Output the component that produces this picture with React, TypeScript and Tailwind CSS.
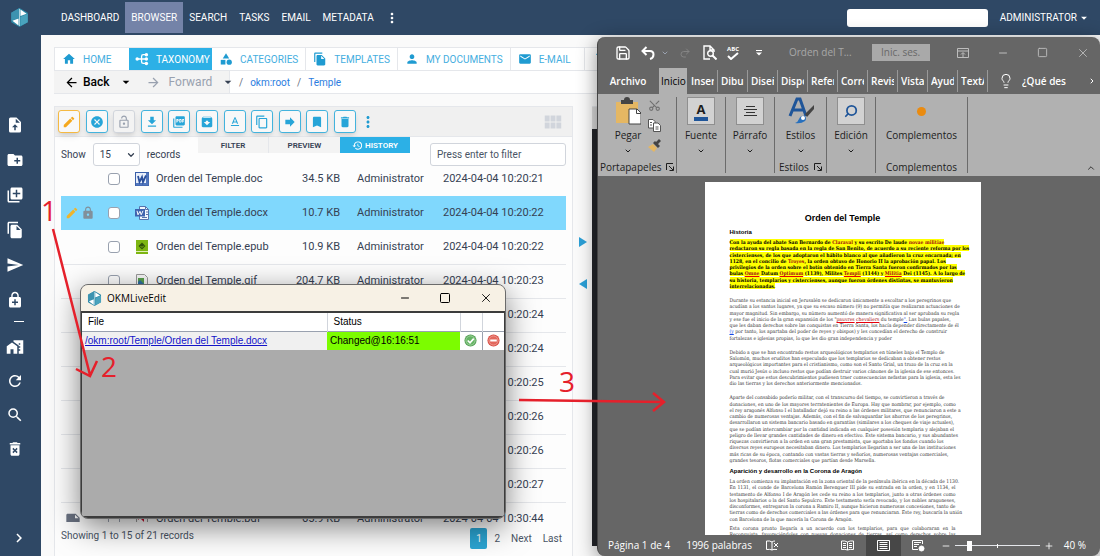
import type { ReactNode } from "react";
import type { IconType } from "react-icons";
import {
  MdArchive,
  MdArrowBack,
  MdArrowDropDown,
  MdArrowForward,
  MdBookmark,
  MdCancel,
  MdCategory,
  MdChevronRight,
  MdContentCopy,
  MdCreateNewFolder,
  MdDelete,
  MdDeleteForever,
  MdEdit,
  MdEmail,
  MdEnhancedEncryption,
  MdFileCopy,
  MdFileDownload,
  MdForward,
  MdHistory,
  MdHome,
  MdHomeWork,
  MdLibraryAdd,
  MdLock,
  MdMoreVert,
  MdNote,
  MdOutlineLockOpen,
  MdPerson,
  MdPictureAsPdf,
  MdRefresh,
  MdSearch,
  MdSend,
  MdTextFormat,
  MdViewModule,
} from "react-icons/md";
import {
  ChevronDown,
  ChevronRight,
  ChevronUp,
  Lightbulb,
  Minus,
  Plus,
  Redo2,
  Save,
  Scissors,
  Search,
  Square,
  X,
} from "lucide-react";

const menu = ["DASHBOARD", "BROWSER", "SEARCH", "TASKS", "EMAIL", "METADATA"];

const sideTop: [string, IconType][] = [
  ["New folder", MdCreateNewFolder],
  ["New record", MdLibraryAdd],
  ["Copy from template", MdFileCopy],
  ["Send", MdSend],
  ["Encrypt", MdEnhancedEncryption],
];

const sideBottom: [string, IconType][] = [
  ["Set home", MdHomeWork],
  ["Refresh", MdRefresh],
  ["Find", MdSearch],
  ["Purge", MdDeleteForever],
];

const toolbar: [string, IconType][] = [
  ["Edit", MdEdit],
  ["Cancel edit", MdCancel],
  ["Lock", MdOutlineLockOpen],
  ["Download", MdFileDownload],
  ["Download as PDF", MdPictureAsPdf],
  ["Archive", MdArchive],
  ["Rename", MdTextFormat],
  ["Copy", MdContentCopy],
  ["Move", MdForward],
  ["Bookmark", MdBookmark],
  ["Delete", MdDelete],
];

type FileKind = "doc" | "docx" | "epub" | "gif" | "pdf";

const files: { name: string; kind: FileKind; size: string; date: string; note?: boolean }[] = [
  { name: "Orden del Temple.doc", kind: "doc", size: "34.5 KB", date: "2024-04-04 10:20:21" },
  { name: "Orden del Temple.docx", kind: "docx", size: "10.7 KB", date: "2024-04-04 10:20:22" },
  { name: "Orden del Temple.epub", kind: "epub", size: "10.9 KB", date: "2024-04-04 10:20:22" },
  { name: "Orden del Temple.gif", kind: "gif", size: "204.7 KB", date: "2024-04-04 10:20:23" },
  { name: "", kind: "gif", size: "", date: "2024-04-04 10:20:24" },
  { name: "", kind: "gif", size: "", date: "2024-04-04 10:20:24" },
  { name: "", kind: "gif", size: "", date: "2024-04-04 10:20:25" },
  { name: "", kind: "gif", size: "", date: "2024-04-04 10:20:26" },
  { name: "", kind: "gif", size: "", date: "2024-04-04 10:20:26" },
  { name: "", kind: "gif", size: "", date: "2024-04-04 10:20:27" },
  { name: "Orden del Temple.pdf", kind: "pdf", size: "65.9 KB", date: "2024-04-04 10:30:44", note: true },
];

// *word* is a spelling mistake, _word_ a grammar hint
const intro = [
  "Con la ayuda del abate San Bernardo de *Claraval* y su escrito De laude *novae* *militiae*",
  "redactaron su regla basada en la regla de San Benito, de acuerdo a su reciente reforma por los",
  "cistercienses, de los que adoptaron el hábito blanco al que añadieron la cruz encarnada; en",
  "1128, en el concilio de *Troyes*, la orden obtuvo de Honorio II la aprobación papal. Los",
  "privilegios de la orden sobre el botín obtenido en Tierra Santa fueron confirmados por las",
  "bulas *Omne* Datum *Optimum* (1139), Milites *Templi* (1144) y *Militia* Dei (1145). A lo largo de",
  "su historia, templarios y cistercienses, aunque fueron órdenes distintas, se mantuvieron",
  "interrelacionadas.",
];

const paragraphs = [
  [
    "Durante su estancia inicial en Jerusalén se dedicaron únicamente a escoltar a los peregrinos que",
    "acudían a los santos lugares, ya que su escaso número (9) no permitía que realizaran actuaciones de",
    "mayor magnitud. Sin embargo, su número aumentó de manera significativa al ser aprobada su regla",
    "y ese fue el inicio de la gran expansión de los \"*pauvres* *chevaliers* du temple_\"._ Las bulas papales,",
    "que les daban derechos sobre las conquistas en Tierra Santa, los hacía depender directamente de él",
    "_(y_ por tanto, los apartaba del poder de reyes y obispos) y les concedían el derecho de construir",
    "fortalezas e iglesias propias, lo que les dio gran independencia y poder",
  ],
  [
    "Debido a que se han encontrado restos arqueológicos templarios en túneles bajo el Templo de",
    "Salomón, muchos eruditos han especulado que los templarios se dedicaban a obtener restos",
    "arqueológicos importantes para el cristianismo, como son el Santo Grial, un trozo de la cruz en la",
    "cual murió Jesús o incluso restos que podían destruir varios cánones de la iglesia de ese entonces.",
    "Para evitar que estos descubrimientos pudiesen traer consecuencias nefastas para la iglesia, esta les",
    "dio las tierras y los derechos anteriormente mencionados.",
  ],
  [
    "Aparte del consabido poderío militar, con el transcurso del tiempo, se convirtieron a través de",
    "donaciones, en uno de los mayores terratenientes de Europa. Hay que nombrar, por ejemplo, como",
    "el rey aragonés Alfonso I el batallador dejó su reino a las órdenes militares, que renunciaron a este a",
    "cambio de numerosas ventajas. Además, con el fin de salvaguardar los ahorros de los peregrinos,",
    "desarrollaron un sistema bancario basado en garantías (similares a los cheques de viaje actuales),",
    "que se podían intercambiar por la cantidad indicada en cualquier posesión templaria y alejaban el",
    "peligro de llevar grandes cantidades de dinero en efectivo. Este sistema bancario, y sus abundantes",
    "riquezas convirtieron a la orden en una gran prestamista, que aportaba los fondos cuando los",
    "diversos reyes europeos necesitaban dinero. Los templarios llegarían a ser una de las instituciones",
    "más ricas de su época, contando con vastas tierras y señoríos, numerosas ventajas comerciales,",
    "grandes tesoros, flotas comerciales que partían desde Marsella.",
  ],
];

const aragon = [
  "La orden comienza su implantación en la zona oriental de la península ibérica en la década de 1130.",
  "En 1131, el conde de Barcelona Ramón Berenguer III pide su entrada en la orden, y en 1134, el",
  "testamento de Alfonso I de Aragón les cede su reino a los templarios, junto a otras órdenes como",
  "los hospitalarios o la del Santo Sepulcro. Este testamento sería revocado, y los nobles aragoneses,",
  "disconformes, entregaron la corona a Ramiro II, aunque hicieron numerosas concesiones, tanto de",
  "tierras como de derechos comerciales a las órdenes para que renunciaran. Este rey, buscaría la unión",
  "con Barcelona de la que nacería la Corona de Aragón.",
];

const corona = [
  "Esta corona pronto llegaría a un acuerdo con los templarios, para que colaboraran en la",
  "Reconquista, favoreciéndoles con nuevas donaciones de tierras, así como derechos sobre las",
];

const ribbonTabs = ["Inser", "Dibu", "Diseñ", "Dispo", "Refer", "Corre", "Revis", "Vista", "Ayud", "TextA"];

function Logo({ className }: { className?: string }) {
  return (
    <svg viewBox="0 0 20 20" className={className} aria-hidden="true">
      <path d="M10 0 18.700 5v10L10 20 1.300 15V5z" fill="#2b87a5" />
      <path d="M10 0 1.300 5v8.500L10 10z" fill="#3d93b0" />
      <path d="M11 1.500v7l6.500-2.500z" fill="#fff" />
      <path d="M2.500 13.500 9 11v7.500z" fill="#fff" />
      <path d="M11 9.500 18.700 6v9L11 19z" fill="#4aa3bd" />
      <path d="M10 1v18" stroke="#d5eaf1" strokeWidth=".8" />
    </svg>
  );
}

function UploadIcon() {
  return (
    <svg viewBox="0 0 24 24" className="size-[18px]" fill="currentColor" fillRule="evenodd" aria-hidden="true">
      <path d="M6 2h8l6 6v12a2 2 0 0 1-2 2H6a2 2 0 0 1-2-2V4a2 2 0 0 1 2-2zm7 1.500V9h5.500zM12 11l-4 4h3v4h2v-4h3z" />
    </svg>
  );
}

function TaxonomyIcon() {
  return (
    <svg viewBox="0 0 16 16" className="size-[14px]" fill="none" stroke="currentColor" strokeWidth="1.500" aria-hidden="true">
      <path d="M3 8h9M12 3H9.500Q7.500 3 7.500 5v6q0 2 2 2H12" />
      <circle cx="2.500" cy="8" r="2" fill="currentColor" stroke="none" />
      <circle cx="13" cy="3" r="2" fill="currentColor" stroke="none" />
      <circle cx="13" cy="8" r="2" fill="currentColor" stroke="none" />
      <circle cx="13" cy="13" r="2" fill="currentColor" stroke="none" />
    </svg>
  );
}

function FileIcon({ kind }: { kind: FileKind }) {
  if (kind === "doc") {
    return (
      <svg viewBox="0 0 14 14" className="size-3.5" aria-hidden="true">
        <rect x=".5" y=".5" width="13" height="13" fill="#e9effa" stroke="#3a5fa9" />
        <path d="M11 1h2.500v12.500H1V11h10z" fill="#5277bd" />
        <path d="m3 4 1.500 6L7 5l1 5 3-6.500" fill="none" stroke="#2a4f9c" strokeWidth="1.800" />
      </svg>
    );
  }
  if (kind === "docx") {
    return (
      <svg viewBox="0 0 14 14" className="size-3.5" aria-hidden="true">
        <path d="M4.500.5h6l3 3v10h-9z" fill="#f3f6fc" stroke="#5673ad" />
        <path d="M10.500.5v3h3M7 11.500h5M11 6h2M11 8.500h2" fill="none" stroke="#5673ad" />
        <rect y="3" width="10" height="7.500" fill="#3f63ae" />
        <path d="m2 4.800 1 4 2-3.500 1.200 3.500 1.800-4" fill="none" stroke="#fff" />
      </svg>
    );
  }
  if (kind === "epub") {
    return (
      <svg viewBox="0 0 14 14" className="size-3.5" aria-hidden="true">
        <rect x="1" width="12" height="14" fill="#7db512" />
        <path d="M1 11.500h12" stroke="#e0efb8" />
        <path d="M7 2.500 10.500 6 7 9.500 3.500 6z" fill="#2f5206" />
        <path d="M5.500 6 7 7.500 8.800 5.700" fill="none" stroke="#7db512" />
      </svg>
    );
  }
  return (
    <svg viewBox="0 0 14 14" className="size-3.5" aria-hidden="true">
      <path d="M1.500.5h8l3 3v10h-11z" fill="#f8f8f8" stroke="#9a9a9a" />
      <rect x="3" y="4" width="6" height="6" fill={kind === "pdf" ? "#c8102e" : "#58a04c"} />
      <path d="M3 8 5 6l4 4H3z" fill={kind === "pdf" ? "#fff" : "#2f6fa5"} />
    </svg>
  );
}

function Line({ text }: { text: string }) {
  return (
    <>
      {text.split(/(\*[^*]+\*|_[^_]+_)/).map((part, i) => {
        if (part.startsWith("*")) {
          return (
            <span key={i} className="text-[#a01010] underline decoration-red-600">
              {part.slice(1, -1)}
            </span>
          );
        }
        if (part.startsWith("_")) {
          return (
            <span key={i} className="text-blue-700 underline">
              {part.slice(1, -1)}
            </span>
          );
        }
        return part;
      })}
    </>
  );
}

function Tab({ children, label }: { children: ReactNode; label: string }) {
  return (
    <a href="#" className="flex min-w-[74px] items-center gap-[7px] border-r border-gray-200 px-[7px]">
      {children}
      {label}
    </a>
  );
}

function Header() {
  return (
    <header className="flex h-[35px] shrink-0 items-center bg-[#2f4865] pl-[10px] pr-[9px] text-[10px] text-white">
      <Logo className="mr-[26px] size-[19px] shrink-0" />
      <nav className="flex items-center">
        {menu.map((m) => (
          <a
            key={m}
            href="#"
            className={
              m === "BROWSER"
                ? "flex h-[31px] items-center bg-[#7483a8] px-[6px]"
                : "flex h-[31px] items-center px-[6px]"
            }
          >
            {m}
          </a>
        ))}
        <button aria-label="More">
          <MdMoreVert className="ml-1 size-4" />
        </button>
      </nav>
      <input aria-label="Quick search" className="ml-auto h-[18px] w-[141px] rounded-[3px] bg-white px-2" />
      <button className="ml-3 flex items-center">
        ADMINISTRATOR
        <MdArrowDropDown className="size-3.5" />
      </button>
    </header>
  );
}

function Sidebar() {
  return (
    <aside className="flex w-[41px] shrink-0 flex-col bg-[#2f4865] pb-[9px] pl-[6px] pt-[81px] text-white">
      <div className="flex flex-col gap-[17px]">
        <button aria-label="Upload" className="w-[18px]">
          <UploadIcon />
        </button>
        {sideTop.map(([label, Icon]) => (
          <button key={label} aria-label={label} className="w-[18px]">
            <Icon className="size-[18px]" />
          </button>
        ))}
      </div>
      <hr className="ml-2 mt-3 w-[10px] border-white" />
      <div className="mt-4 flex flex-col gap-4">
        {sideBottom.map(([label, Icon]) => (
          <button key={label} aria-label={label} className="w-[18px]">
            <Icon className="size-[18px]" />
          </button>
        ))}
      </div>
      <button aria-label="Expand" className="mt-auto w-[18px] pl-1">
        <MdChevronRight className="size-[18px]" />
      </button>
    </aside>
  );
}

function Navigation() {
  return (
    <div className="border-y border-gray-200">
      <nav className="flex h-[22px] whitespace-nowrap bg-white text-[10px] text-[#45aee0]">
        <a href="#" className="flex w-[75px] items-center gap-[7px] border-l border-gray-200 pl-[7px]">
          <MdHome className="size-[14px] text-[#1f9bd1]" />
          HOME
        </a>
        <a href="#" className="flex w-[83px] items-center gap-[7px] bg-[#2cb0e6] pl-[6px] text-white">
          <TaxonomyIcon />
          TAXONOMY
        </a>
        <Tab label="CATEGORIES">
          <MdCategory className="size-[14px] text-[#1f9bd1]" />
        </Tab>
        <Tab label="TEMPLATES">
          <MdFileCopy className="size-[14px] text-[#1f9bd1]" />
        </Tab>
        <Tab label="MY DOCUMENTS">
          <MdPerson className="size-[14px] text-[#1f9bd1]" />
        </Tab>
        <Tab label="E-MAIL">
          <MdEmail className="size-[14px] text-[#1f9bd1]" />
        </Tab>
        <a href="#" aria-label="Trash" className="flex items-center pl-2">
          <MdDelete className="size-4 text-[#1f9bd1]" />
        </a>
      </nav>
      <div className="flex h-[23px] items-center border-t border-gray-200 bg-white text-[12px]">
        <div className="flex w-[176px] shrink-0 items-center self-stretch border-r border-gray-200 bg-[#f3f3f3] pl-[10px]">
          <button className="flex items-center gap-1 font-medium text-black">
            <MdArrowBack className="size-[15px]" />
            Back
            <MdArrowDropDown className="ml-1 size-4" />
          </button>
          <button className="ml-3 flex items-center gap-1 text-gray-400" disabled>
            <MdArrowForward className="mr-1 size-[15px]" />
            Forward
            <MdArrowDropDown className="ml-1 size-4 text-gray-700" />
          </button>
        </div>
        <div className="flex gap-[7px] pl-[9px] text-[10px] text-[#2b7de0]">
          <span className="text-gray-500">/</span>
          <a href="#">okm:root</a>
          <span className="text-gray-500">/</span>
          <a href="#">Temple</a>
        </div>
      </div>
    </div>
  );
}

function Browser() {
  return (
    <section className="flex w-[519px] shrink-0 flex-col border-x border-t border-gray-200 bg-[#fdfdfd]">
      <div className="flex h-[30px] shrink-0 items-center border-b border-gray-200 bg-[#f0f0f0] pl-[3px] pr-2">
        <div className="flex w-[298px] justify-between">
          {toolbar.map(([label, Icon], i) => (
            <button
              key={label}
              aria-label={label}
              className={
                i === 0
                  ? "flex h-[23px] w-[22px] items-center justify-center rounded-[3px] border border-[#f5b942] bg-[#f8f8f8] text-[#f5a81c] shadow-md"
                  : i === 2
                    ? "flex h-[23px] w-[22px] items-center justify-center rounded-[3px] border border-gray-300 bg-[#f3f3f3] text-gray-400 shadow-md"
                    : "flex h-[23px] w-[22px] items-center justify-center rounded-[3px] border border-[#43b3dd] bg-[#f8f8f8] text-[#27a5d8] shadow-md"
              }
            >
              <Icon className="size-[14px]" />
            </button>
          ))}
        </div>
        <button aria-label="More actions" className="ml-[3px] text-[#1f9bd1]">
          <MdMoreVert className="size-[18px]" />
        </button>
        <button aria-label="Grid view" className="ml-auto text-gray-300">
          <MdViewModule className="size-[22px]" />
        </button>
      </div>
      <div className="flex h-[29px] shrink-0 items-start px-[6px] text-[10px] text-gray-700">
        <label className="flex w-[137px] items-center gap-[7px] pt-[6px]">
          Show
          <span className="relative flex items-center">
            <select className="h-[23px] w-[47px] appearance-none rounded-[3px] border border-gray-300 bg-white pl-[6px]">
              <option>15</option>
            </select>
            <ChevronDown className="pointer-events-none absolute right-1 size-[10px]" strokeWidth={3} />
          </span>
          records
        </label>
        <div className="flex h-4 text-[8px] font-semibold">
          <button className="w-[71px] border-r border-gray-200 bg-[#f3f3f3] pt-px">FILTER</button>
          <button className="w-[71px] bg-[#f3f3f3] pt-px">PREVIEW</button>
          <button className="flex w-[70px] items-center justify-center gap-[2px] bg-[#2cb0e6] pt-px text-white">
            <MdHistory className="size-[11px]" />
            HISTORY
          </button>
        </div>
        <input
          aria-label="Filter"
          placeholder="Press enter to filter"
          className="ml-auto mt-[6px] h-[23px] w-[136px] rounded-[3px] border border-gray-300 bg-white px-[6px] placeholder:text-gray-600"
        />
      </div>
      <div className="-mt-1 h-[360px] shrink-0 overflow-hidden px-[6px]">
        <table className="w-full table-fixed text-[11px] text-gray-700">
          <colgroup>
            <col className="w-[39px]" />
            <col className="w-[28px]" />
            <col className="w-[28px]" />
            <col />
            <col className="w-[50px]" />
            <col className="w-[103px]" />
            <col className="w-[123px]" />
          </colgroup>
          <tbody>
            {files.map((f, i) => (
              <tr
                key={i}
                className={
                  f.kind === "docx" ? "h-[34px] bg-[#80d8fd]" : i === 0 ? "h-[34px]" : "h-[34px] border-b border-gray-200"
                }
              >
                <td>
                  {f.kind === "docx" && (
                    <span className="flex items-center gap-[2px] pl-1">
                      <MdEdit className="size-[14px] text-[#f0b429]" />
                      <MdLock className="size-[14px] text-[#81909b]" />
                    </span>
                  )}
                  {f.note && <MdNote className="ml-1 size-4 text-gray-500" />}
                </td>
                <td>
                  <input
                    type="checkbox"
                    aria-label={`Select row ${i + 1}`}
                    className="mx-auto block size-3 appearance-none rounded-[3px] border border-gray-400 bg-white"
                  />
                </td>
                <td>
                  <span className="flex justify-center">
                    <FileIcon kind={f.kind} />
                  </span>
                </td>
                <td className="whitespace-nowrap">{f.name}</td>
                <td className="whitespace-nowrap text-right">{f.size}</td>
                <td className="pl-[17px]">{f.name && "Administrator"}</td>
                <td className="whitespace-nowrap">{f.date}</td>
              </tr>
            ))}
          </tbody>
        </table>
      </div>
      <div className="flex items-start justify-between px-[6px] pt-[6px] text-[10px] text-gray-600">
        <span>Showing 1 to 15 of 21 records</span>
        <nav className="flex items-center gap-[7px]">
          <a href="#" className="flex h-[21px] w-[17px] items-center justify-center rounded-[2px] bg-[#2ba5d3] text-white">
            1
          </a>
          <a href="#">2</a>
          <a href="#" className="ml-1">
            Next
          </a>
          <a href="#" className="mx-1">
            Last
          </a>
        </nav>
      </div>
    </section>
  );
}

function LiveEdit() {
  return (
    <section className="absolute left-[80px] top-[284px] flex h-[235px] w-[426px] flex-col overflow-hidden rounded-lg border border-[#6b6b6b] bg-[#ababab] font-['Liberation_Sans',sans-serif] text-black shadow-[0_8px_30px_rgba(0,0,0,0.5)]">
      <header className="flex h-[26px] shrink-0 items-center bg-[#f7f1e5] pl-[6px] pr-3 font-['Open_Sans',sans-serif] text-[10px]">
        <Logo className="mr-[5px] size-[15px]" />
        OKMLiveEdit
        <div className="ml-auto flex items-center gap-7">
          <button aria-label="Minimize">
            <Minus className="size-3" strokeWidth={2} />
          </button>
          <button aria-label="Maximize">
            <Square className="size-3" strokeWidth={2} />
          </button>
          <button aria-label="Close">
            <X className="size-[14px]" strokeWidth={1.5} />
          </button>
        </div>
      </header>
      <div className="flex-1 border-x border-b-2 border-t-2 border-[#3c3c3c]">
        <table className="w-full table-fixed text-left text-[10px]">
          <colgroup>
            <col />
            <col className="w-[133px]" />
            <col className="w-[22px]" />
            <col className="w-[22px]" />
          </colgroup>
          <thead>
            <tr className="h-[18px] bg-white">
              <th className="pl-[6px] font-normal">File</th>
              <th className="border-l border-gray-300 pl-[6px] font-normal">Status</th>
              <th className="border-l border-gray-300" />
              <th className="border-l border-gray-300" />
            </tr>
          </thead>
          <tbody>
            <tr className="h-[19px] border-t border-gray-400 bg-[#f0f0f0]">
              <td className="pl-[3px]">
                <a href="#" className="text-[#1414c8] underline">
                  /okm:root/Temple/Orden del Temple.docx
                </a>
              </td>
              <td className="bg-[#7cfc00] pl-[3px]">Changed@16:16:51</td>
              <td className="bg-white">
                <button aria-label="Check in" className="mx-auto block">
                  <svg viewBox="0 0 14 14" className="size-[13px]">
                    <circle cx="7" cy="7" r="6.500" fill="#4f9e50" />
                    <circle cx="7" cy="7" r="5" fill="#66b565" stroke="#a6d6a4" />
                    <path d="m4 7 2.500 2.500L10.500 5" fill="none" stroke="#fff" strokeWidth="1.800" />
                  </svg>
                </button>
              </td>
              <td className="border-l border-gray-400 bg-white">
                <button aria-label="Cancel" className="mx-auto block">
                  <svg viewBox="0 0 14 14" className="size-[13px]">
                    <circle cx="7" cy="7" r="6.500" fill="#d8463d" />
                    <circle cx="7" cy="7" r="5" fill="#e3685d" stroke="#f0a39b" />
                    <path d="M3.500 7h7" stroke="#fff" strokeWidth="2.200" />
                  </svg>
                </button>
              </td>
            </tr>
          </tbody>
        </table>
      </div>
    </section>
  );
}

function RibbonGroup({ label, children }: { label: string; children: ReactNode }) {
  return (
    <button className="flex w-[49px] shrink-0 flex-col items-center border-r border-[#6b6b6b]">
      <span className="flex size-7 items-center justify-center border border-[#8f8f8f] bg-[#d2d2d2]">{children}</span>
      <span className="mt-[2px] leading-4">{label}</span>
      <ChevronDown className="mt-1 size-2" strokeWidth={3} />
    </button>
  );
}

function Launcher() {
  return (
    <svg viewBox="0 0 8 8" className="size-2" fill="none" stroke="currentColor" aria-hidden="true">
      <path d="M.5 7V.5H7M3 3l4 4M7.500 3.500v4h-4" />
    </svg>
  );
}

function Word() {
  return (
    <section className="absolute bottom-0 left-[597px] right-0 top-[37px] flex flex-col overflow-hidden rounded-lg border-l border-[#444] bg-[#666] font-['Open_Sans',sans-serif] text-[10px] text-white shadow-[0_4px_20px_rgba(0,0,0,0.45)]">
      <header className="flex h-[31px] shrink-0 items-center pl-[17px] pr-[10px]">
        <button aria-label="Save">
          <Save className="size-4" />
        </button>
        <button aria-label="Undo" className="ml-[10px] flex items-center gap-[6px]">
          <svg viewBox="0 0 14 14" className="size-[14px]" fill="none" stroke="currentColor" strokeWidth="2">
            <path d="M5.500 1 1.500 5l4 4M2 5h7q3.500 0 3.500 3.500T9 13" />
          </svg>
          <ChevronDown className="size-2 text-gray-400" strokeWidth={3} />
        </button>
        <button aria-label="Redo" className="ml-[10px] text-[#858585]" disabled>
          <Redo2 className="size-3" />
        </button>
        <button aria-label="Print preview" className="ml-3">
          <svg viewBox="0 0 14 15" className="h-[15px] w-[14px]" fill="none" stroke="currentColor" strokeWidth="1.400">
            <path d="M7 14H1V1h6l4 4v2M7 1v4h4" />
            <circle cx="7.500" cy="8.500" r="2.800" />
            <path d="m9.500 10.500 4 4" strokeWidth="2" />
          </svg>
        </button>
        <button aria-label="Spelling" className="ml-[10px] flex flex-col items-center text-[6px] font-bold leading-[6px]">
          ABC
          <svg viewBox="0 0 12 8" className="h-2 w-3" fill="none" stroke="currentColor" strokeWidth="2">
            <path d="m1 4 3 3 7-6" />
          </svg>
        </button>
        <button aria-label="Customize toolbar" className="ml-[17px]">
          <svg viewBox="0 0 6 6" className="size-[6px]" fill="currentColor">
            <path d="M0 0h6v1H0zM0 2.500h6L3 5.500z" />
          </svg>
        </button>
        <span className="ml-[27px] whitespace-nowrap text-[#a8a8a8]">Orden del T...</span>
        <button className="ml-5 h-[17px] w-[58px] bg-[#a9a9a9] text-[#686868]">Inic. ses.</button>
        <div className="ml-auto flex items-center gap-7 text-[#bdbdbd]">
          <button aria-label="Ribbon options">
            <svg viewBox="0 0 12 10" className="h-[10px] w-3" fill="none" stroke="currentColor">
              <path d="M.5.5h11v9H.5zM.5 3h11M6 9V5M4 6.500l2-2 2 2" />
            </svg>
          </button>
          <button aria-label="Minimize Word">
            <Minus className="size-3" />
          </button>
          <button aria-label="Maximize Word">
            <Square className="size-[11px]" />
          </button>
          <button aria-label="Close Word">
            <X className="size-[14px]" strokeWidth={1.5} />
          </button>
        </div>
      </header>
      <nav className="flex h-[26px] shrink-0 items-center pl-[11px] pr-1">
        <button className="w-[38px] font-semibold">Archivo</button>
        <button className="ml-3 h-full w-[28px] overflow-hidden whitespace-nowrap bg-[#b1b1b1] pl-[2px] text-left text-black">
          Inicio
        </button>
        <div className="flex pl-1 font-semibold">
          {ribbonTabs.map((t) => (
            <button key={t} className="mr-[3px] h-[22px] w-[27px] border-r border-[#999] pr-[3px] text-left">
              <span className="block overflow-hidden whitespace-nowrap">{t}</span>
            </button>
          ))}
        </div>
        <Lightbulb className="ml-[7px] size-4 shrink-0" strokeWidth={1.5} />
        <button className="ml-2 w-[44px] overflow-hidden whitespace-nowrap text-left font-semibold">¿Qué des</button>
        <ChevronRight className="ml-auto size-2 shrink-0" strokeWidth={3} />
      </nav>
      <div className="flex h-[82px] shrink-0 bg-[#b1b1b1] py-[3px] text-[#1d1d1d]">
        <div className="flex w-[79px] shrink-0 flex-col justify-between border-r border-[#6b6b6b] px-[2px]">
          <div className="flex gap-[6px] pl-[14px]">
            <button className="flex w-7 flex-col items-center">
              <svg viewBox="0 0 26 28" className="h-[28px] w-[26px]">
                <path d="M1 5h22v21H1z" fill="#e5b763" />
                <path d="M6 3h3q0-3 3-3t3 3h3v4H6z" fill="#444" />
                <path d="M14 12h8l4 4v11H14z" fill="#fff" stroke="#444" />
                <path d="M21.500 12v4.500H26" fill="none" stroke="#444" />
              </svg>
              <span className="mt-[2px] leading-4">Pegar</span>
              <ChevronDown className="mt-1 size-2" strokeWidth={3} />
            </button>
            <div className="flex flex-col gap-[7px] pt-[2px]">
              <button aria-label="Cut" className="text-[#707070]">
                <Scissors className="size-[13px] -rotate-90" />
              </button>
              <button aria-label="Copy text">
                <svg viewBox="0 0 13 13" className="size-[13px]" fill="#fff" stroke="#555">
                  <path d="M.5.500H5l2 2V9H.5z" />
                  <path d="M5.500 4H10l2.500 2.500v6h-7zM7.500 8h3M7.500 10h3M2 3.500h2M2 6h2" />
                </svg>
              </button>
              <button aria-label="Copy format">
                <svg viewBox="0 0 13 13" className="size-[13px]">
                  <path d="m0 8 5-3 4 4-3 4z" fill="#e5b763" />
                  <path d="m5 4 5 5 2-2-2-2 3-3-2-2-3 3-1-1z" fill="#444" />
                </svg>
              </button>
            </div>
          </div>
          <div className="flex items-center justify-between leading-3">
            Portapapeles
            <Launcher />
          </div>
        </div>
        <RibbonGroup label="Fuente">
          <span className="border-b-4 border-[#1f5599] px-[3px] text-[13px] font-bold leading-4">A</span>
        </RibbonGroup>
        <RibbonGroup label="Párrafo">
          <svg viewBox="0 0 13 11" className="h-[11px] w-[13px]" stroke="#333">
            <path d="M2 .5h9M0 3.500h13M2 6.500h9M0 9.500h13" />
          </svg>
        </RibbonGroup>
        <div className="flex w-[52px] shrink-0 flex-col justify-between border-r border-[#6b6b6b] px-1">
          <button className="flex flex-col items-center">
            <svg viewBox="0 0 26 28" className="h-[28px] w-[26px]">
              <path d="M2 19 9 2h3l6 17M5 13h10" fill="none" stroke="#1f5599" strokeWidth="3" />
              <path d="M26 8 17 17l2 3 7-8z" fill="#444" />
              <path d="M7 26q3-1 4-4 2-4 6-3 2 3 0 5-4 3-10 2z" fill="#2870bd" />
              <circle cx="15" cy="21" r="2" fill="#fff" />
            </svg>
            <span className="mt-[2px] leading-4">Estilos</span>
            <ChevronDown className="mt-1 size-2" strokeWidth={3} />
          </button>
          <div className="flex items-center justify-between leading-3">
            Estilos
            <Launcher />
          </div>
        </div>
        <RibbonGroup label="Edición">
          <Search className="size-[14px] -scale-x-100 text-[#1f5599]" strokeWidth={3} />
        </RibbonGroup>
        <div className="flex w-[92px] shrink-0 flex-col items-center justify-between border-r border-[#6b6b6b]">
          <button className="flex flex-col items-center">
            <span className="mb-[11px] mt-[10px] size-[9px] rounded-full bg-[#ea8b10]" />
            <span className="leading-4">Complementos</span>
          </button>
          <span className="leading-3">Complementos</span>
        </div>
        <button aria-label="Collapse ribbon" className="ml-auto mr-1 self-end">
          <ChevronUp className="size-[10px]" />
        </button>
      </div>
      <div className="flex min-h-0 flex-1 justify-center overflow-hidden pr-[13px] pt-[6px]">
        <article className="h-full w-[276px] shrink-0 overflow-hidden bg-white px-[25px] pt-[31px] font-['DejaVu_Serif_Condensed','Liberation_Serif',serif] text-[5px] leading-tight text-[#333]">
          <h1 className="text-center font-['Liberation_Sans',sans-serif] text-[9px] font-bold leading-[10px] text-black">
            Orden del Temple
          </h1>
          <h2 className="mt-[5px] font-['Liberation_Sans',sans-serif] text-[6px] font-bold leading-2 text-black">
            Historia
          </h2>
          <div className="mt-[3px] font-bold text-black">
            {intro.map((l) => (
              <p key={l} className="whitespace-nowrap">
                <span className="bg-[#ffff00]">
                  <Line text={l} />
                </span>
              </p>
            ))}
          </div>
          {paragraphs.map((lines) => (
            <div key={lines[0]} className="mt-2">
              {lines.map((l) => (
                <p key={l} className="whitespace-nowrap">
                  <Line text={l} />
                </p>
              ))}
            </div>
          ))}
          <h2 className="mt-1 font-['Liberation_Sans',sans-serif] text-[6px] font-bold leading-2 text-black">
            Aparición y desarrollo en la Corona de Aragón
          </h2>
          <div className="mt-[3px] whitespace-nowrap">
            {aragon.map((l, i) => (
              <p key={l} className={i < 6 ? "[text-align-last:justify]" : ""}>
                {l}
              </p>
            ))}
          </div>
          <div className="mt-[3px] whitespace-nowrap [text-align-last:justify]">
            {corona.map((l) => (
              <p key={l}>{l}</p>
            ))}
          </div>
        </article>
      </div>
      <footer className="flex h-[21px] shrink-0 items-center pl-[10px] pr-[14px]">
        <span>Página 1 de 4</span>
        <span className="ml-4">1996 palabras</span>
        <svg viewBox="0 0 13 11" className="ml-[14px] h-[11px] w-[13px]" fill="none" stroke="currentColor">
          <path d="M6 10V2Q4 .5.500 1v8.500Q4 9 6 10q1.500-1 5-.5M6 2q1-1 3-1M8 3l4 4M12 3 8 7" />
        </svg>
        <div className="ml-auto flex items-center self-stretch">
          <button aria-label="Read mode" className="mr-3">
            <svg viewBox="0 0 13 11" className="h-[11px] w-[13px]" fill="none" stroke="currentColor">
              <path d="M6.500 10V2Q4 .5.500 1v8.500Q4 9 6.500 10 9 9 12.500 9.500V1Q9 .5 6.500 2M2 3.500h3M2 5.500h3M2 7.500h3M8 3.500h3M8 5.500h3M8 7.500h3" />
            </svg>
          </button>
          <button aria-label="Print layout" className="flex h-full w-[35px] items-center justify-center bg-[#474747]">
            <svg viewBox="0 0 13 11" className="h-[11px] w-[13px]" fill="none" stroke="currentColor">
              <path d="M.5.500h12v10H.5zM2.500 2.500h8M2.500 4.500h8M2.500 6.500h8M2.500 8.500h8" />
            </svg>
          </button>
          <button aria-label="Web layout" className="ml-[11px]">
            <svg viewBox="0 0 13 12" className="h-3 w-[13px]" fill="none" stroke="currentColor">
              <path d="M6 9.500H.5v-9h10V4M2 2.500h7M2 4.500h5M2 6.500h3" />
              <circle cx="9.500" cy="8.500" r="2.500" fill="currentColor" />
            </svg>
          </button>
          <button aria-label="Zoom out" className="ml-4">
            <Minus className="size-[10px]" />
          </button>
          <span className="relative flex items-center">
            <input
              type="range"
              aria-label="Zoom"
              defaultValue={16}
              className="mx-1 h-px w-[85px] appearance-none bg-gray-200 [&::-webkit-slider-thumb]:h-[10px] [&::-webkit-slider-thumb]:w-[5px] [&::-webkit-slider-thumb]:appearance-none [&::-webkit-slider-thumb]:bg-white"
            />
            <span className="pointer-events-none absolute left-1/2 h-1 w-px bg-white" />
          </span>
          <button aria-label="Zoom in">
            <Plus className="size-[10px]" />
          </button>
          <span className="ml-[10px]">40 %</span>
        </div>
      </footer>
    </section>
  );
}

export default function App() {
  return (
    <main className="relative flex h-screen flex-col overflow-hidden bg-[#fafafa] font-[Roboto,sans-serif]">
      <Header />
      <div className="flex min-h-0 flex-1">
        <Sidebar />
        <div className="flex min-w-0 flex-1 flex-col overflow-hidden pl-[13px] pt-3">
          <Navigation />
          <div className="mt-3 flex min-h-0 flex-1">
            <Browser />
            <div className="flex w-[19px] shrink-0 flex-col items-center gap-8 pt-[131px] text-[#2b9fd6]">
              <button aria-label="Expand panel" className="h-[10px] w-2">
                <svg viewBox="0 0 8 10" fill="currentColor">
                  <path d="M0 0v10l8-5z" />
                </svg>
              </button>
              <button aria-label="Collapse panel" className="h-[10px] w-2">
                <svg viewBox="0 0 8 10" fill="currentColor">
                  <path d="M8 0v10L0 5z" />
                </svg>
              </button>
            </div>
            <div className="mb-[10px] flex flex-1 flex-col border-t border-gray-200 bg-[#24262b]">
              <div className="h-[22px] bg-[#dcdcdc]" />
            </div>
          </div>
        </div>
      </div>
      <LiveEdit />
      <Word />
      <svg className="pointer-events-none absolute inset-0 size-full" fill="none" stroke="#e5202b" strokeWidth="2.500">
        <path d="M53 229 90 375M76 369l14 7 7-15" />
        <path d="M519 400 664 402M653 393l11 9-11 9" />
        <g fill="#e5202b" stroke="none" className="font-['Open_Sans',sans-serif] text-[28px]">
          <text x="41" y="221">
            1
          </text>
          <text x="101" y="377">
            2
          </text>
          <text x="559" y="392">
            3
          </text>
        </g>
      </svg>
    </main>
  );
}
